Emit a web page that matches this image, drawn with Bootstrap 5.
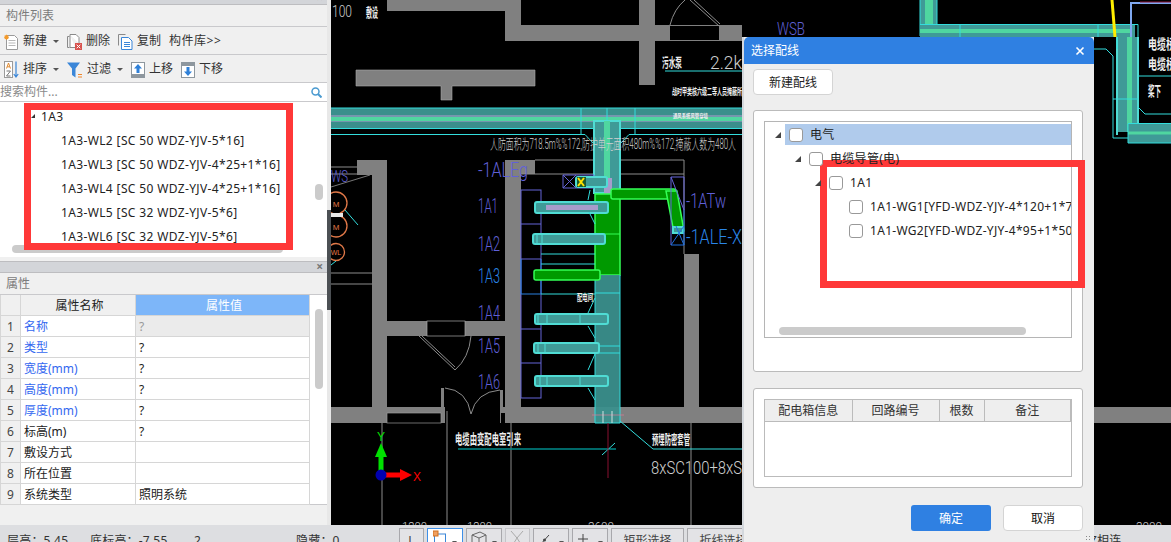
<!DOCTYPE html>
<html lang="zh-CN">
<head>
    <meta charset="UTF-8">
    <title>选择配线</title>
    <link href="https://cdn.jsdelivr.net/npm/bootstrap@5.3.0/dist/css/bootstrap.min.css" rel="stylesheet">
    <style>
        html, body { height: 542px; overflow: hidden; }
        body { background: #000; color: #222; font: 12px/1.2 "Noto Sans", "Noto Sans CJK SC", sans-serif; }
        .app-shell { width: 1171px; height: 542px; position: relative; overflow: hidden; }
        .work-row { height: 525px; }

        /* left panel */
        .side-panel { width: 327px; background: #f0f0f0; flex: none; }
        .side-rail { width: 4px; background: #e8e8e8; flex: none; }
        .side-rail div { margin-top: 210px; height: 100px; background: #4c5054; }
        .dock-bar { background: #d3d5d9; border-bottom: 1px solid #bdbdc0; position: relative; }
        .dock-top { height: 5px; overflow: hidden; }
        .dock-mid { height: 12px; margin-top: 4px; border-top: 1px solid #bdbdc0; }
        .dock-close { position: absolute; right: 4px; top: -1px; font-size: 12px; line-height: 12px; color: #777; font-weight: 700; }
        .dock-top .dock-close { top: -8px; }
        .pane-title { height: 22px; padding-left: 6px; color: #7b7b7b; font-size: 12px; line-height: 22px; border-bottom: 1px solid #c9c9cc; }
        .tool-row { height: 28px; padding: 2px 0 0 4px; gap: 8px; border-bottom: 1px solid #c9c9cc; white-space: nowrap; }
        .tool-item { gap: 4px; color: #333; }
        .tool-item svg { display: block; flex: none; }
        .tool-caret { width: 0; height: 0; border: 3px solid transparent; border-top: 3px solid #555; border-bottom: 0; margin-left: 2px; }
        .lib-link { letter-spacing: .5px; }
        .search-box { height: 19px; background: #fff; border-bottom: 1px solid #c9c9cc; color: #8a8a8a; line-height: 18px; padding-right: 5px; }
        .comp-tree { height: 155px; background: #fff; position: relative; overflow: hidden; padding-top: 3px; }
        .comp-row { height: 24px; line-height: 24px; padding-left: 61px; color: #222; white-space: nowrap; letter-spacing: .36px; }
        .comp-row.root { padding-left: 41px; }
        .comp-row.root::before { content: ""; position: absolute; left: 31px; top: 12px; width: 0; height: 0; border-left: 4px solid transparent; border-bottom: 4px solid #333; }
        .thumb-h { position: absolute; height: 8px; border-radius: 4px; background: #cbcbcb; }
        .thumb-v { position: absolute; width: 8px; border-radius: 4px; background: #cbcbcb; }
        .comp-hthumb { left: 12px; width: 271px; top: 143px; }
        .comp-vthumb { left: 315px; top: 82px; height: 16px; }
        .mark-box { position: absolute; border: 7px solid #ff3838; pointer-events: none; }
        .mark-tree { left: 24px; top: 1px; width: 269px; height: 147px; }

        .prop-wrap { height: 210px; background: #fff; position: relative; border-bottom: 1px solid #c9c9cc; }
        .prop-table { width: 310px; margin: 0; table-layout: fixed; font-size: 12px; --bs-table-bg: transparent; border-collapse: collapse; }
        .prop-table th, .prop-table td { height: 20.9px; padding: 2px 0 0 3px; border: 1px solid #d6d6d6; border-top: 0; line-height: 18px; font-weight: 400; color: #222; white-space: nowrap; }
        .prop-table th { text-align: center; background: #f0f0f0; }
        .prop-table th.val-head { background: #7db6f9; color: #fff; }
        .prop-table .idx { width: 20px; background: #f0f0f0; text-align: center; padding: 2px 0 0; color: #444; }
        .prop-table .name-col { width: 115px; }
        .prop-table .linked { color: #3468f0; }
        .prop-table .muted-val { background: #ebebeb; color: #999; }
        .prop-vthumb { left: 315px; top: 14px; height: 80px; }

        /* drawing */
        .cad-canvas { display: block; flex: none; width: 840px; height: 525px; background: #000; }
        .cad-canvas text { font-family: "Liberation Sans", "Noto Sans CJK SC", sans-serif; }
        .wall { fill: #808080; }
        .gline { stroke: #8c8c8c; stroke-width: 1; fill: none; }
        .tray { fill: #3f9a97; stroke: #4fdcd4; stroke-width: 2; }
        .tray-on { fill: #009900; stroke: #33ff55; stroke-width: 1.5; }
        .cy { stroke: #33dddd; stroke-width: 1; fill: none; }
        .bl { stroke: #6464d8; stroke-width: 1; fill: none; }
        .cad-canvas text.tag { fill: #6060d8; font-family: Roboto, "Liberation Sans", sans-serif; font-weight: 300; }
        .cad-canvas text.tag-blue { fill: #2a86e8; }
        .note { fill: #eee; font-weight: 700; }
        .cad-canvas text.dim { fill: #d0d0d0; font-family: Roboto, "Liberation Sans", "Noto Sans CJK SC", sans-serif; font-weight: 300; }

        /* status bar */
        .status-bar { height: 17px; background: #dddee1; position: relative; overflow: hidden; color: #333; }
        .status-txt { position: absolute; top: 9px; line-height: 14px; letter-spacing: .2px; }
        .status-btn { position: absolute; top: 3px; height: 20px; background: #e3e3e6; border: 1px solid #a8a8ac; border-bottom: 0; text-align: center; line-height: 24px; color: #444; white-space: nowrap; }
        .status-btn svg { display: block; margin: 1px auto 0; }
        .status-btn.on { background: #fff; border: 1px solid #3d8fe8; }
        .status-btn.dis { color: #aaa; border-color: #c4c4c8; }
        .b1 { left: 399px; width: 25px; }
        .b2 { left: 427px; width: 36px; }
        .b3 { left: 466px; width: 36px; }
        .b4 { left: 505px; width: 25px; }
        .b5 { left: 533px; width: 36px; }
        .b6 { left: 572px; width: 36px; }
        .b7 { left: 611px; width: 73px; }
        .b8 { left: 687px; width: 73px; }
        .t1 { left: 7px; } .t2 { left: 90px; } .t3 { left: 194px; } .t4 { left: 296px; } .t5 { left: 1090px; }
        .grip { position: absolute; left: 1085px; top: 535px; width: 6px; height: 7px; background: radial-gradient(#888 1px, transparent 1px) 0 0 / 3px 3px; }

        /* dialog */
        .wire-dialog { position: absolute; left: 742px; top: 37px; width: 352px; height: 520px; background: #eee; border: 0; border-radius: 0; border-left: 2px solid #d4d8dd; }
        .wire-head { height: 27px; background: #2f80e2; color: #fff; padding: 0 9px 0 7px; font-size: 12px; line-height: 27px; border: 0; border-radius: 0; }
        .wire-close { width: 10px; height: 10px; display: block; }
        .wire-body { padding: 5px 9px 0 9px; }
        .plain-btn { width: 80px; height: 26px; padding: 1px 0 0; font-size: 12px; line-height: 24px; color: #222; background: #fff; border: 1px solid #d4d4d4; border-radius: 4px; }
        .group-box { width: 330px; background: #fff; border: 1px solid #bbb; border-radius: 3px; padding: 10px; }
        .group-tree { height: 262px; margin-top: 15px; }
        .group-info { height: 100px; margin-top: 16px; }
        .tree-frame { height: 217px; width: 308px; border: 1px solid #b5b5b5; position: relative; overflow: hidden; padding-top: 1px; }
        .wire-row { height: 24px; display: flex; align-items: center; white-space: nowrap; position: relative; letter-spacing: .3px; }
        .wire-row .form-check-input { width: 14px; height: 14px; margin: 0 7px 0 0; border: 1px solid #999; border-radius: 3px; flex: none; background-color: #fff; }
        .wire-row.picked::after { content: ""; position: absolute; left: 20px; right: 0; top: 1px; bottom: 2px; background: #b0cbec; z-index: 0; }
        .wire-row > * { position: relative; z-index: 1; }
        .wire-row i { width: 0; height: 0; border-left: 6px solid transparent; border-bottom: 6px solid #444; margin-right: 8px; flex: none; }
        .lvl-0 { padding-left: 10px; }
        .lvl-1 { padding-left: 30px; }
        .lvl-2 { padding-left: 50px; }
        .lvl-3 { padding-left: 84px; }
        .wire-hthumb { left: 14px; width: 247px; top: 205px; }
        .mark-wire { left: 76px; top: 123px; width: 265px; height: 128px; }
        .info-frame { height: 78px; width: 308px; border: 1px solid #bbb; }
        .info-table { width: 306px; margin: 0; table-layout: fixed; font-size: 12px; --bs-table-bg: transparent; }
        .info-table th { height: 21px; padding: 0; background: #eee; color: #333; font-weight: 400; text-align: center; border: 1px solid #bbb; border-top: 0; border-left: 0; line-height: 20px; }
        .col-wide { width: 87px; }
        .col-thin { width: 45px; }
        .wire-foot { width: 330px; gap: 12px; margin-top: 17px; }
        .wire-ok { width: 80px; height: 26px; padding: 2px 0 0; font-size: 12px; background: #2f80e2; border: 0; border-radius: 3px; }
        .wire-no { width: 80px; height: 26px; padding: 1px 0 0; font-size: 12px; background: #fff; color: #111; border: 1px solid #d4d4d4; border-radius: 4px; }
    </style>
</head>
<body>
<div class="app-shell">
    <div class="work-row d-flex">
        <div class="side-panel">
            <div class="dock-bar dock-top"><span class="dock-close">×</span></div>
            <div class="pane-title">构件列表</div>
            <div class="tool-row d-flex align-items-center">
                <span class="tool-item d-flex align-items-center">
                    <svg width="15" height="16" viewBox="0 0 15 16"><path d="M2.5 1.5h8l3 3v11h-11z" fill="#fff" stroke="#9a9a9a"/><path d="M4.5 6.5h7M4.5 9h7M4.5 11.5h7" stroke="#b8b8b8"/><path d="M0 3.2h5M2.5 .8v5M.8 1.5l3.4 3.4M4.2 1.5L.8 4.9" stroke="#f39a2c" stroke-width="1.1"/></svg>
                    新建<span class="tool-caret"></span>
                </span>
                <span class="tool-item d-flex align-items-center">
                    <svg width="15" height="16" viewBox="0 0 15 16"><path d="M.5 2.5h2M.5 2.5v11h2" fill="none" stroke="#8a8a8a"/><path d="M3 .5h6l3 3v6M3 .5v13h5" fill="#fff" stroke="#8a8a8a"/><rect x="8" y="9" width="7" height="7" fill="#d9534f"/><path d="M9.7 10.7l3.6 3.6M13.3 10.7l-3.6 3.6" stroke="#fff"/></svg>
                    删除
                </span>
                <span class="tool-item d-flex align-items-center">
                    <svg width="15" height="16" viewBox="0 0 15 16"><path d="M.5 11.5v-11h7" fill="none" stroke="#8a8a8a"/><path d="M3.5 3.5h7l3.5 3.5v8.500h-10.500z" fill="#fff" stroke="#3a86d8"/><path d="M6 8.500h6M6 10.500h6M6 12.500h6" stroke="#3a86d8"/></svg>
                    复制
                </span>
                <span class="tool-item lib-link">构件库&gt;&gt;</span>
            </div>
            <div class="tool-row d-flex align-items-center">
                <span class="tool-item d-flex align-items-center">
                    <svg width="15" height="17" viewBox="0 0 15 17"><rect x=".5" y=".5" width="8" height="16" fill="#fff" stroke="#9a9a9a"/><path d="M2.500 7.500L4.500 2l2 5.500M3.200 5.800h2.600" fill="none" stroke="#e08a30"/><path d="M2.500 10h4l-4 5h4" fill="none" stroke="#777"/><path d="M12 .5v15M9.800 13l2.200 3 2.200-3" fill="none" stroke="#3a86d8" stroke-width="1.2"/></svg>
                    排序<span class="tool-caret"></span>
                </span>
                <span class="tool-item d-flex align-items-center">
                    <svg width="16" height="16" viewBox="0 0 16 16"><path d="M0 .5h13L8.500 6.500V15.500L5 13V6.500z" fill="#3a86d8"/><path d="M11 12.500h4M11 15h4" stroke="#f0862a"/></svg>
                    过滤<span class="tool-caret"></span>
                </span>
                <span class="tool-item d-flex align-items-center">
                    <svg width="14" height="16" viewBox="0 0 14 16"><rect width="14" height="16" fill="#8e979e"/><rect x="1" y="1" width="12" height="11" fill="#fff"/><path d="M7 2l4 4.500H8.500V11h-3V6.500H3z" fill="#2f80d8"/></svg>
                    上移
                </span>
                <span class="tool-item d-flex align-items-center">
                    <svg width="14" height="16" viewBox="0 0 14 16"><rect width="14" height="16" fill="#8e979e"/><rect x="1" y="4" width="12" height="11" fill="#fff"/><path d="M7 14l4-4.500H8.500V5h-3v4.500H3z" fill="#2f80d8"/></svg>
                    下移
                </span>
            </div>
            <div class="search-box d-flex justify-content-between align-items-center">
                <span>搜索构件...</span>
                <svg width="11" height="11" viewBox="0 0 11 11"><circle cx="4.500" cy="4.500" r="3.500" fill="none" stroke="#4a9ad0" stroke-width="1.500"/><path d="M7 7l3.500 3.500" stroke="#4a9ad0" stroke-width="2"/></svg>
            </div>
            <div class="comp-tree">
                <div class="comp-row root">1A3</div>
                <div class="comp-row">1A3-WL2 [SC 50 WDZ-YJV-5*16]</div>
                <div class="comp-row">1A3-WL3 [SC 50 WDZ-YJV-4*25+1*16]</div>
                <div class="comp-row">1A3-WL4 [SC 50 WDZ-YJV-4*25+1*16]</div>
                <div class="comp-row">1A3-WL5 [SC 32 WDZ-YJV-5*6]</div>
                <div class="comp-row">1A3-WL6 [SC 32 WDZ-YJV-5*6]</div>
                <span class="thumb-h comp-hthumb"></span>
                <span class="thumb-v comp-vthumb"></span>
                <span class="mark-box mark-tree"></span>
            </div>
            <div class="dock-bar dock-mid"><span class="dock-close">×</span></div>
            <div class="pane-title">属性</div>
            <div class="prop-wrap">
                <table class="table prop-table">
                    <colgroup><col class="idx"><col class="name-col"><col></colgroup>
                    <thead><tr><th class="idx"></th><th>属性名称</th><th class="val-head">属性值</th></tr></thead>
                    <tbody>
                        <tr><td class="idx">1</td><td class="linked">名称</td><td class="muted-val">?</td></tr>
                        <tr><td class="idx">2</td><td class="linked">类型</td><td>?</td></tr>
                        <tr><td class="idx">3</td><td class="linked">宽度(mm)</td><td>?</td></tr>
                        <tr><td class="idx">4</td><td class="linked">高度(mm)</td><td>?</td></tr>
                        <tr><td class="idx">5</td><td class="linked">厚度(mm)</td><td>?</td></tr>
                        <tr><td class="idx">6</td><td>标高(m)</td><td>?</td></tr>
                        <tr><td class="idx">7</td><td>敷设方式</td><td></td></tr>
                        <tr><td class="idx">8</td><td>所在位置</td><td></td></tr>
                        <tr><td class="idx">9</td><td>系统类型</td><td>照明系统</td></tr>
                    </tbody>
                </table>
                <span class="thumb-v prop-vthumb"></span>
            </div>
        </div>
        <div class="side-rail"><div></div></div>

        <svg class="cad-canvas" viewBox="331 0 840 525">
            <!-- walls -->
            <path class="wall" d="M387 0H521V25H742V41H655V85H639V41H505V11H387z"/>
            <rect class="wall" x="639" y="0" width="16" height="25"/>
            <rect x="670" y="26" width="49" height="14" fill="#000"/>
            <path class="gline" d="M670 25q4-16 15-25M690 0l29 26M694 0l26 24"/>
            <path class="wall" d="M356 70H535V86H452V100H441V86H356z" stroke="#aaa" stroke-width=".6"/>
            <path class="wall" d="M357 160H387V407H372V175H357z"/>
            <rect class="wall" x="505" y="160" width="16" height="247"/>
            <rect class="wall" x="505" y="160" width="30" height="14"/>
            <path class="gline" d="M535 160H684V254M521 174H684"/>
            <rect class="wall" x="684" y="254" width="15" height="153"/>
            <rect class="wall" x="331" y="407" width="840" height="16"/>
            <rect class="wall" x="387" y="321" width="118" height="15"/>
            <rect x="427" y="321" width="38" height="15" fill="#000" stroke="#aaa" stroke-width=".7"/>
            <rect x="387" y="413" width="54" height="10" fill="#000" stroke="#999" stroke-width=".7"/>
            <rect x="445" y="407" width="55" height="16" fill="#000"/>
            <rect x="501" y="413" width="4" height="10" fill="#000"/>
            <rect class="wall" x="441" y="388" width="3" height="25"/>
            <rect class="wall" x="500" y="390" width="3" height="23"/>
            <path class="gline" d="M419 336l36 34M422 336l33 31M455 370q14-12 16-34M445 388q22 2 26 26M500 390q-24 2-29 24"/>
            <path class="gline" d="M331 273H372M331 284H372M331 174H357M331 167H357"/>
            <path d="M331 187L370 175" stroke="#777"/>
            <path class="gline" d="M382 423V525M447 411V525M511 423V525M691 423V525"/>

            <!-- main cable tray -->
            <rect x="331" y="108" width="411" height="20" fill="#3a8f8c"/>
            <rect x="331" y="115" width="411" height="7" fill="#a79ccb" opacity=".55"/>
            <rect x="331" y="117" width="411" height="4" fill="#4fd6a0"/>
            <path class="cy" stroke-width="1.500" d="M331 108H742M331 128.500H742"/>
            <path class="cy" d="M331 134.500H585L594 144M620 144L629 134.500H742M581 108V134M607 108V134M635 108V134"/>

            <!-- riser -->
            <rect class="tray" x="594" y="121" width="26" height="72"/>
            <rect x="604" y="121" width="6" height="72" fill="#4fd6a0"/>
            <rect x="604" y="178" width="8" height="17" fill="#a79ccb"/>
            <rect class="tray-on" x="595" y="194" width="25" height="81"/>
            <path d="M596 234H620" stroke="#33ff55"/>
            <rect x="595" y="275" width="25" height="148" fill="#3a8f8c" opacity=".95"/>
            <path class="cy" d="M595 275V423H620V275M595 293H620M600 346H620M595 353H620"/>
            <path d="M592 415H624" stroke="#e07a9a" opacity=".7"/>
            <path d="M603 411V423M612 411V423" stroke="#d0e0e0"/>

            <!-- distribution boxes -->
            <rect class="bl" x="521" y="190" width="20" height="208"/>
            <path class="bl" d="M521 224H541M521 259H541M521 329H541M521 363H541"/>
            <path d="M521 259V294H541V259" stroke="#2a80e0" fill="none"/>
            <path class="cy" d="M541 254H595M541 264H595M541 294H595"/>
            <path class="bl" d="M563 175H594V188H563zM563 175L576 188M563 188L576 175"/>

            <!-- branches -->
            <rect class="tray" x="576" y="177" width="31" height="10" rx="2"/>
            <rect x="577" y="177" width="9" height="10" fill="#1c5a30"/>
            <path d="M578 178l6 8M584 178l-6 8" stroke="#ffe000" stroke-width="2"/>
            <rect class="tray" x="535" y="202" width="73" height="11" rx="2"/>
            <rect x="546" y="205" width="52" height="5" fill="#a79ccb"/>
            <rect class="tray" x="533" y="234" width="72" height="10" rx="2"/>
            <path d="M537 234V244M542 234V244" stroke="#4fdcd4"/>
            <rect class="tray-on" x="534" y="270" width="66" height="10" rx="2"/>
            <rect class="tray" x="535" y="314" width="73" height="10" rx="2"/>
            <path d="M538 314V324M547 314V324M580 314V324" stroke="#4fdcd4"/>
            <rect class="tray" x="534" y="343" width="65" height="10" rx="2"/>
            <path d="M538 343V353M545 343V353" stroke="#4fdcd4"/>
            <rect class="tray" x="535" y="376" width="73" height="10" rx="2"/>
            <path d="M540 376V386M547 376V386M580 376V386" stroke="#4fdcd4"/>
            <path class="cy" d="M590 190L588 200M589 212L595 224M588 313L595 298M588 326L595 338M588 370L595 354M588 388L595 400"/>

            <!-- right branch -->
            <rect class="tray-on" x="611" y="189" width="65" height="10" rx="2"/>
            <path class="tray-on" d="M666 191H677L684 231L674 233z"/>
            <rect class="tray" x="673" y="227" width="10" height="6"/>
            <path class="bl" d="M671 177H684V210L671 177V245"/>
            <path d="M671 245H684V210M671 245L684 226M684 245L676 226" stroke="#2070e0" fill="none"/>

            <!-- tags -->
            <g font-size="20">
                <text class="tag" x="478" y="177" textLength="50" lengthAdjust="spacingAndGlyphs">-1ALEg</text>
                <text class="tag" x="478" y="213" textLength="20" lengthAdjust="spacingAndGlyphs">1A1</text>
                <text class="tag" x="478" y="251" textLength="22" lengthAdjust="spacingAndGlyphs">1A2</text>
                <text class="tag tag-blue" x="478" y="283" textLength="22" lengthAdjust="spacingAndGlyphs">1A3</text>
                <text class="tag" x="478" y="320" textLength="22" lengthAdjust="spacingAndGlyphs">1A4</text>
                <text class="tag" x="478" y="353" textLength="22" lengthAdjust="spacingAndGlyphs">1A5</text>
                <text class="tag" x="478" y="389" textLength="22" lengthAdjust="spacingAndGlyphs">1A6</text>
                <text class="tag" x="686" y="208" textLength="40" lengthAdjust="spacingAndGlyphs">-1ATw</text>
                <text class="tag tag-blue" x="686" y="244" textLength="56" lengthAdjust="spacingAndGlyphs">-1ALE-X</text>
                <text class="tag" x="331" y="182" textLength="17" lengthAdjust="spacingAndGlyphs" font-size="17">WS</text>
                <text class="tag" x="777" y="35" textLength="28" lengthAdjust="spacingAndGlyphs" font-size="18">WSB</text>
            </g>

            <!-- notes -->
            <text class="dim" x="332" y="17" textLength="20" lengthAdjust="spacingAndGlyphs" font-size="16">100</text>
            <text class="note" x="366" y="17" font-size="13" textLength="12" lengthAdjust="spacingAndGlyphs">敷设</text>
            <text class="note" x="662" y="67" font-size="13" textLength="20" lengthAdjust="spacingAndGlyphs">污水泵</text>
            <text class="dim" x="710" y="69" textLength="32" lengthAdjust="spacingAndGlyphs" font-size="19">2.2k</text>
            <path class="cy" d="M665 71H742"/>
            <text class="note" x="672" y="95" textLength="70" lengthAdjust="spacingAndGlyphs" font-size="9">战时甲类核六级二等人员掩蔽所</text>
            <text class="note" x="673" y="118" textLength="35" lengthAdjust="spacingAndGlyphs" font-size="6" fill="#b6e4dc">通风系统风管穿墙</text>
            <text class="dim" x="490" y="149" textLength="246" lengthAdjust="spacingAndGlyphs" font-size="14">人防面积为718.5m%%172,防护单元面积480m%%172,掩蔽人数为480人</text>
            <text class="note" x="455" y="444" textLength="66" lengthAdjust="spacingAndGlyphs" font-size="14">电缆由变配电室引来</text>
            <text class="note" x="652" y="444" textLength="38" lengthAdjust="spacingAndGlyphs" font-size="13">预埋防密套管</text>
            <text class="dim" x="651" y="474" textLength="91" lengthAdjust="spacingAndGlyphs" font-size="19">8xSC100+8xS</text>
            <text class="note" x="577" y="301" font-size="9" textLength="16" lengthAdjust="spacingAndGlyphs">配电间</text>
            <text class="dim" x="402" y="531" textLength="25" lengthAdjust="spacingAndGlyphs" font-size="12">1200</text>
            <text class="dim" x="467" y="531" textLength="25" lengthAdjust="spacingAndGlyphs" font-size="12">1200</text>
            <text class="dim" x="588" y="531" textLength="26" lengthAdjust="spacingAndGlyphs" font-size="12">3600</text>
            <text class="dim" x="1136" y="531" textLength="26" lengthAdjust="spacingAndGlyphs" font-size="12">3000</text>

            <!-- motors -->
            <g fill="none" stroke="#e07848" stroke-width="1.300">
                <circle cx="336" cy="203" r="11"/>
                <circle cx="336" cy="226" r="11"/>
                <circle cx="336" cy="252" r="8.500"/>
            </g>
            <g font-size="8" fill="#e07848" text-anchor="middle">
                <text x="336" y="207">M</text>
                <text x="336" y="230">M</text>
                <text x="336" y="255" font-size="7">WL</text>
            </g>
            <rect x="331" y="213" width="12" height="4" fill="#e8e8e8"/>
            <path class="cy" d="M345 210L358 225M331 265L336 261"/>

            <!-- axis -->
            <path d="M381 475V450" stroke="#00e000" stroke-width="5"/>
            <path d="M375 457L381 443L387 457z" fill="#00e000"/>
            <path d="M381 475H402" stroke="#ff0000" stroke-width="5"/>
            <path d="M400 469L412 475L400 481z" fill="#ff0000"/>
            <circle cx="381" cy="475" r="5.500" fill="#0000b0"/>
            <text x="377" y="441" font-size="12" fill="#00e000">Y</text>
            <text x="413" y="481" font-size="12" fill="#ff0000">X</text>
            <path d="M458 449H616" stroke="#008b8b" stroke-width="1.500"/>
            <path d="M602 455L615 443" stroke="#33dddd"/>
            <path d="M608 423V478" stroke="#8a1030"/>
            <path class="cy" d="M620 421L653 449H742"/>

            <!-- upper right tray -->
            <rect x="920" y="0" width="17" height="25" fill="#3f9a97"/>
            <rect x="925" y="0" width="8" height="25" fill="#4fd6a0"/>
            <path class="cy" d="M920 0V36M937 0V25"/>
            <rect x="920" y="25" width="215" height="12" fill="#3f9a97"/>
            <path d="M920 31H1130" stroke="#4fd6a0" stroke-width="4"/>
            <path class="cy" d="M920 24.500H1138V37M960 24.500V37M1098 24.500V37"/>
            <path d="M1112 0L1115 37" stroke="#ffee00" stroke-width="3"/>
            <path d="M1131 38V3H1171" stroke="#7fa8f0" stroke-width="2" fill="none"/>
            <path d="M1140 2H1171" stroke="#8a1030"/>
            <circle cx="1131" cy="39" r="1.500" fill="#ddd"/>
            <rect x="1117" y="37" width="21" height="95" fill="#3f9a97"/>
            <rect x="1127" y="37" width="5" height="95" fill="#4fd6a0"/>
            <path d="M1117 37V135M1138 37V124" stroke="#4fdcd4" stroke-width="2" fill="none"/>
            <rect x="1128" y="123" width="43" height="20" fill="#3f9a97"/>
            <path d="M1128 133H1171" stroke="#4fd6a0" stroke-width="3"/>
            <path class="cy" d="M1128 123.500H1171M1128 143H1171M1128 143V124M1138 76H1171M1138 107L1145 114H1171M1094 49H1106L1113 56V138H1128M1113 99H1138M1117 49V37"/>
            <text class="note" x="1148" y="49" textLength="36" lengthAdjust="spacingAndGlyphs" font-size="14">电缆桥架</text>
            <text class="note" x="1148" y="69" textLength="36" lengthAdjust="spacingAndGlyphs" font-size="14">电缆桥架</text>
            <text class="note" x="1148" y="96" font-size="14" textLength="13" lengthAdjust="spacingAndGlyphs">桨下</text>
        </svg>
    </div>

    <div class="status-bar">
        <span class="status-txt t1">层高：5.45</span>
        <span class="status-txt t2">底标高：-7.55</span>
        <span class="status-txt t3">2</span>
        <span class="status-txt t4">隐藏：0</span>
        <span class="status-btn b1">L</span>
        <span class="status-btn b2 on">
            <svg width="24" height="16" viewBox="0 0 24 16"><rect x="1.500" y="4" width="11" height="12" fill="none" stroke="#3a86d8"/><rect x="0" y="1" width="5" height="5" fill="#f0a060" stroke="#d07020"/><path d="M19 11h5l-2.500 3z" fill="#555"/></svg>
        </span>
        <span class="status-btn b3">
            <svg width="26" height="16" viewBox="0 0 26 16"><path d="M1 5l8-3 6 3v8l-6 3-8-3zM1 5l7 3 7-3M8 8v8" fill="none" stroke="#666"/><path d="M21 11h5l-2.500 3z" fill="#555"/></svg>
        </span>
        <span class="status-btn b4 dis">
            <svg width="15" height="16" viewBox="0 0 15 16"><path d="M1 1l6 7 6-7M7 8l-5 8M7 8l5 8" fill="none" stroke="#aaa"/></svg>
        </span>
        <span class="status-btn b5">
            <svg width="26" height="16" viewBox="0 0 26 16"><path d="M2 15L11 5" stroke="#444"/><circle cx="6.500" cy="10" r="1.500" fill="#444"/><path d="M21 11h5l-2.500 3z" fill="#555"/></svg>
        </span>
        <span class="status-btn b6">
            <svg width="26" height="16" viewBox="0 0 26 16"><path d="M1 9h10M6 4v10" stroke="#444"/><path d="M21 11h5l-2.500 3z" fill="#555"/></svg>
        </span>
        <span class="status-btn b7">矩形选择</span>
        <span class="status-btn b8">折线选择</span>
        <span class="status-txt t5">Z相连</span>
    </div>

    <div class="card wire-dialog">
        <div class="card-header wire-head d-flex justify-content-between align-items-center">
            <span>选择配线</span>
            <svg class="wire-close" viewBox="0 0 10 10"><path d="M1.500 1.500l7 7M8.500 1.500l-7 7" stroke="#fff" stroke-width="1.600"/></svg>
        </div>
        <div class="wire-body">
            <button type="button" class="btn plain-btn">新建配线</button>
            <div class="group-box group-tree">
                <div class="tree-frame">
                    <div class="wire-row lvl-0 picked"><i></i><input class="form-check-input" type="checkbox"><span>电气</span></div>
                    <div class="wire-row lvl-1"><i></i><input class="form-check-input" type="checkbox"><span>电缆导管(电)</span></div>
                    <div class="wire-row lvl-2"><i></i><input class="form-check-input" type="checkbox"><span>1A1</span></div>
                    <div class="wire-row lvl-3"><input class="form-check-input" type="checkbox"><span>1A1-WG1[YFD-WDZ-YJY-4*120+1*70]</span></div>
                    <div class="wire-row lvl-3"><input class="form-check-input" type="checkbox"><span>1A1-WG2[YFD-WDZ-YJY-4*95+1*50]</span></div>
                    <span class="thumb-h wire-hthumb"></span>
                </div>
            </div>
            <div class="group-box group-info">
                <div class="info-frame">
                    <table class="table info-table">
                        <colgroup><col class="col-wide"><col class="col-wide"><col class="col-thin"><col></colgroup>
                        <thead><tr><th>配电箱信息</th><th>回路编号</th><th>根数</th><th>备注</th></tr></thead>
                    </table>
                </div>
            </div>
            <div class="wire-foot d-flex justify-content-end">
                <button type="button" class="btn btn-primary wire-ok">确定</button>
                <button type="button" class="btn wire-no">取消</button>
            </div>
        </div>
        <span class="mark-box mark-wire"></span>
    </div>
    <span class="grip"></span>
</div>
<script src="https://cdn.jsdelivr.net/npm/bootstrap@5.3.0/dist/js/bootstrap.bundle.min.js"></script>
</body>
</html>
